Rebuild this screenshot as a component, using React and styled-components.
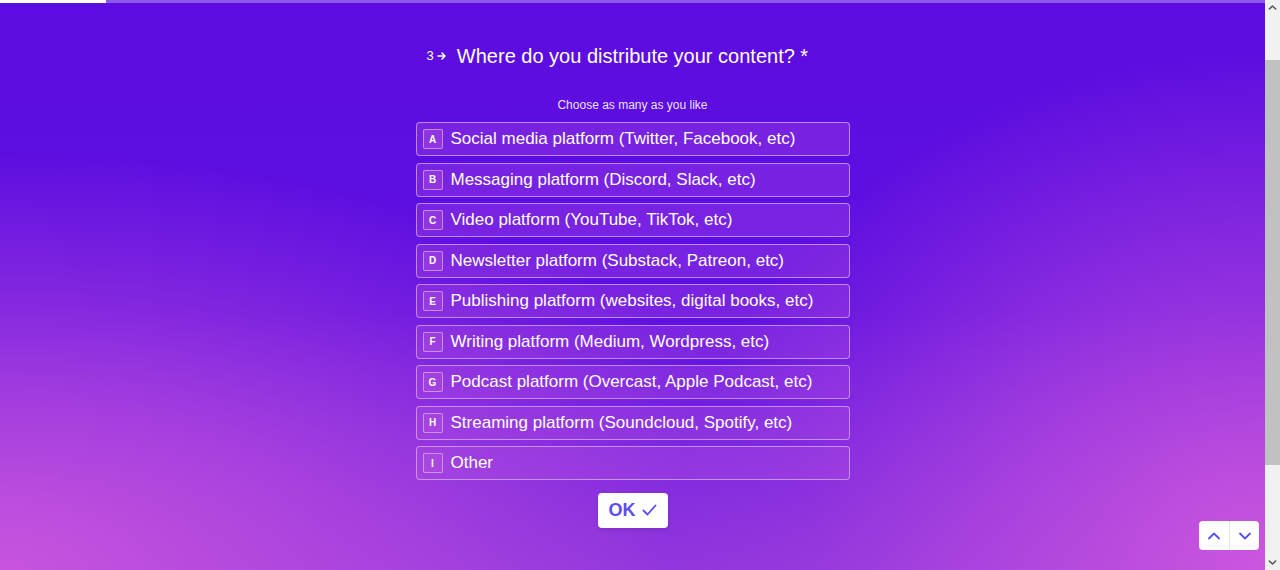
import React from 'react'
import styled, { createGlobalStyle } from 'styled-components'

const GlobalStyle = createGlobalStyle`
    html, body {
        margin: 0;
        padding: 0;
        height: 100%;
        overflow: hidden;
        font-family: "Liberation Sans", Arial, sans-serif;
    }
`;

const Frame = styled.div`
    display: flex;
    width: 100vw;
    height: 100vh;
`;

const Page = styled.div`
    position: relative;
    flex: 1;
    min-width: 0;
    overflow: hidden;
    background:
        radial-gradient(ellipse 820px 420px at 0% 100%, rgba(200, 84, 222, 1), rgba(200, 84, 222, 0)),
        radial-gradient(ellipse 600px 520px at 100% 100%, rgba(204, 86, 222, 1), rgba(204, 86, 222, 0)),
        linear-gradient(180deg, #5c0ce0 0%, #5e0fe0 55%, #8530dd 100%);
`;

const Scrollbar = styled.div`
    width: 15px;
    flex-shrink: 0;
    display: flex;
    flex-direction: column;
    align-items: center;
    background: #f1f1f1;
`;

const ScrollArrow = styled.div`
    width: 15px;
    height: 15px;
    display: flex;
    align-items: center;
    justify-content: center;
    margin-top: ${({ $bottom }) => ($bottom ? 'auto' : '0')};
`;

const ScrollThumb = styled.div`
    width: 15px;
    height: 405px;
    margin-top: 45px;
    background: #c1c1c1;
`;

const Progress = styled.div`
    position: absolute;
    top: 0;
    left: 0;
    right: 0;
    height: 3px;
    background: rgba(255, 255, 255, 0.3);
`;

const ProgressFill = styled.div`
    height: 100%;
    background: #ffffff;
`;

const Content = styled.main`
    display: flex;
    flex-direction: column;
    align-items: center;
    padding-top: 42px;
    color: #ffffff;
`;

const Question = styled.h1`
    position: relative;
    margin: 0;
    font-size: 20px;
    line-height: 28px;
    font-weight: normal;
`;

const QNumber = styled.span`
    position: absolute;
    right: 100%;
    top: 0;
    margin-right: 10px;
    display: flex;
    align-items: center;
    gap: 3px;
    height: 28px;
    font-size: 13px;
`;

const Hint = styled.p`
    margin: 27px 0 9px;
    font-size: 12px;
    line-height: 16px;
    color: rgba(255, 255, 255, 0.9);
`;

const Options = styled.ul`
    list-style: none;
    margin: 0;
    padding: 0;
    width: 434px;
    display: flex;
    flex-direction: column;
    gap: 6.5px;
`;

const Option = styled.li`
    box-sizing: border-box;
    height: 34px;
    display: flex;
    align-items: center;
    gap: 8px;
    padding: 0 6px;
    border: 1px solid rgba(222, 190, 255, 0.65);
    border-radius: 4px;
    background: rgba(190, 90, 230, 0.28);
    font-size: 17px;
    cursor: pointer;
`;

const Key = styled.span`
    box-sizing: border-box;
    width: 20px;
    height: 20px;
    display: flex;
    align-items: center;
    justify-content: center;
    border: 1px solid rgba(230, 200, 255, 0.6);
    border-radius: 2px;
    background: rgba(180, 80, 220, 0.4);
    font-size: 10px;
    font-weight: bold;
`;

const OkButton = styled.button`
    margin-top: 12.5px;
    width: 70px;
    height: 35px;
    display: flex;
    align-items: center;
    justify-content: center;
    gap: 6px;
    border: none;
    border-radius: 4px;
    background: #ffffff;
    color: #5b4df0;
    font-family: inherit;
    font-size: 18px;
    font-weight: bold;
    box-shadow: 0 2px 4px rgba(0, 0, 0, 0.1);
`;

const NavGroup = styled.div`
    position: absolute;
    right: 6px;
    bottom: 20px;
    display: flex;
    background: #ffffff;
    border-radius: 4px;
    overflow: hidden;
`;

const NavButton = styled.button`
    width: 30px;
    height: 29px;
    display: flex;
    align-items: center;
    justify-content: center;
    padding: 0;
    border: none;
    background: transparent;
    & + & {
        border-left: 1px solid #e6e6ee;
    }
`;

const options = [
    'Social media platform (Twitter, Facebook, etc)',
    'Messaging platform (Discord, Slack, etc)',
    'Video platform (YouTube, TikTok, etc)',
    'Newsletter platform (Substack, Patreon, etc)',
    'Publishing platform (websites, digital books, etc)',
    'Writing platform (Medium, Wordpress, etc)',
    'Podcast platform (Overcast, Apple Podcast, etc)',
    'Streaming platform (Soundcloud, Spotify, etc)',
    'Other',
];

const Arrow = () => (
    <svg width="10" height="10" viewBox="0 0 10 10" fill="none">
        <path d="M1 5h7M5 2l3 3-3 3" stroke="#fff" strokeWidth="1.6" strokeLinecap="round" strokeLinejoin="round" />
    </svg>
);

const Chevron = ({ up, color = '#5b4df0', size = 14, width = 1.8 }) => (
    <svg width={size} height={size} viewBox="0 0 14 14" fill="none">
        <path d={up ? 'M2 9.5l5-5 5 5' : 'M2 4.5l5 5 5-5'} stroke={color} strokeWidth={width} strokeLinecap="round" strokeLinejoin="round" />
    </svg>
);

export default function App() {
    return (
        <>
            <GlobalStyle />
            <Frame>
                <Page>
                    <Progress>
                        <ProgressFill style={{ width: '8.4%' }} />
                    </Progress>
                    <Content>
                        <Question>
                            <QNumber>3<Arrow /></QNumber>
                            Where do you distribute your content? *
                        </Question>
                        <Hint>Choose as many as you like</Hint>
                        <Options>
                            {options.map((label, i) => (
                                <Option key={label}>
                                    <Key>{String.fromCharCode(65 + i)}</Key>
                                    {label}
                                </Option>
                            ))}
                        </Options>
                        <OkButton>
                            OK
                            <svg width="15" height="12" viewBox="0 0 15 12" fill="none">
                                <path d="M1.5 6.5l4 4 8-9" stroke="#5b4df0" strokeWidth="1.8" strokeLinecap="round" strokeLinejoin="round" />
                            </svg>
                        </OkButton>
                    </Content>
                    <NavGroup>
                        <NavButton><Chevron up /></NavButton>
                        <NavButton><Chevron /></NavButton>
                    </NavGroup>
                </Page>
                <Scrollbar>
                    <ScrollArrow><Chevron up color="#505050" size={9} width={2.2} /></ScrollArrow>
                    <ScrollThumb />
                    <ScrollArrow $bottom><Chevron color="#505050" size={9} width={2.2} /></ScrollArrow>
                </Scrollbar>
            </Frame>
        </>
    )
}
